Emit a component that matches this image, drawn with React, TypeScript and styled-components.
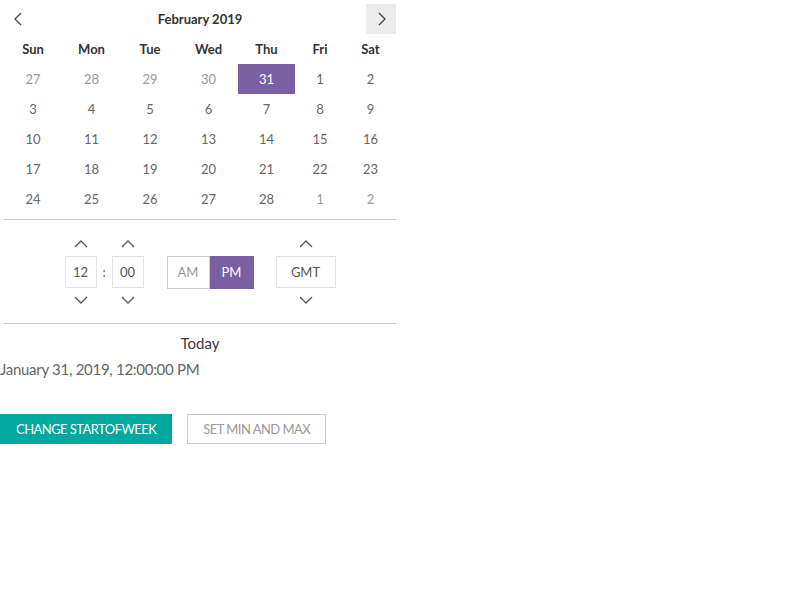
import React from "react";
import styled, { createGlobalStyle } from "styled-components";

const GlobalStyle = createGlobalStyle`
  body {
    margin: 0;
    font-family: Lato, "Open Sans", sans-serif;
    background: #fff;
    color: #333;
  }
`;

const Page = styled.div`
  width: 400px;
`;

const Calendar = styled.div`
  padding: 4px 4px 0 4px;
`;

const Header = styled.div`
  display: flex;
  align-items: center;
  justify-content: space-between;
  height: 30px;
`;

const NavButton = styled.button<{ $hover?: boolean }>`
  width: 30px;
  height: 30px;
  border: none;
  padding: 0;
  display: flex;
  align-items: center;
  justify-content: center;
  background: ${(p) => (p.$hover ? "#ececec" : "transparent")};
  color: #444;
  cursor: pointer;
`;

const Title = styled.div`
  font-size: 13px;
  font-weight: 700;
  color: #333;
`;

const Grid = styled.div`
  display: grid;
  grid-template-columns: 58px 59px 58px 59px 57px 50px 51px;
  grid-auto-rows: 30px;
`;

const WeekDay = styled.div`
  display: flex;
  align-items: center;
  justify-content: center;
  font-size: 13px;
  font-weight: 700;
  color: #333;
`;

const Day = styled.div<{ $muted?: boolean; $selected?: boolean }>`
  display: flex;
  align-items: center;
  justify-content: center;
  font-size: 13px;
  color: ${(p) => (p.$selected ? "#fff" : p.$muted ? "#999" : "#666")};
  background: ${(p) => (p.$selected ? "#7b5fa5" : "transparent")};
  cursor: pointer;
`;

const Divider = styled.div<{ $top?: number }>`
  margin: ${(p) => p.$top ?? 0}px 4px 0 4px;
  border-top: 1px solid #ccc;
`;

const TimeRow = styled.div`
  display: flex;
  justify-content: center;
  align-items: center;
  padding: 12px 0 11px 0;
`;

const Spinner = styled.div`
  display: flex;
  flex-direction: column;
  align-items: center;
`;

const Arrow = styled.button`
  height: 24px;
  width: 32px;
  border: none;
  background: transparent;
  padding: 0;
  display: flex;
  align-items: center;
  justify-content: center;
  color: #555;
  cursor: pointer;
`;

const Field = styled.div<{ $width: number }>`
  width: ${(p) => p.$width}px;
  height: 32px;
  box-sizing: border-box;
  border: 1px solid #e3e3e3;
  display: flex;
  align-items: center;
  justify-content: center;
  font-size: 13px;
  color: #555;
`;

const Colon = styled.span`
  width: 15px;
  text-align: center;
  font-size: 13px;
  color: #555;
`;

const Meridiem = styled.div`
  display: flex;
  margin: 0 22px 0 23px;
`;

const MeridiemButton = styled.button<{ $active?: boolean }>`
  width: ${(p) => (p.$active ? 44 : 43)}px;
  height: 33px;
  box-sizing: border-box;
  border: 1px solid ${(p) => (p.$active ? "#7b5fa5" : "#ccc")};
  background: ${(p) => (p.$active ? "#7b5fa5" : "#fff")};
  color: ${(p) => (p.$active ? "#fff" : "#999")};
  font-family: inherit;
  font-size: 13px;
  padding: 0;
  cursor: pointer;
`;

const Today = styled.div`
  text-align: center;
  font-size: 15px;
  line-height: 20px;
  color: #3a3a3a;
  padding-top: 9px;
`;

const DateText = styled.div`
  font-size: 15px;
  line-height: 20px;
  letter-spacing: -0.28px;
  color: #666;
  margin-top: 6px;
`;

const Actions = styled.div`
  display: flex;
  gap: 15px;
  margin-top: 35px;
`;

const ActionButton = styled.button<{ $primary?: boolean }>`
  height: 30px;
  padding: 0 15px;
  box-sizing: border-box;
  border: 1px solid ${(p) => (p.$primary ? "#00a8a0" : "#ccc")};
  background: ${(p) => (p.$primary ? "#00a8a0" : "#fff")};
  color: ${(p) => (p.$primary ? "#fff" : "#999")};
  font-family: inherit;
  font-size: 13px;
  letter-spacing: -0.55px;
  text-transform: uppercase;
  cursor: pointer;
`;

const Chevron = ({ dir }: { dir: "left" | "right" | "up" | "down" }) => {
  const paths: Record<string, string> = {
    left: "M10 2 L4 8 L10 14",
    right: "M6 2 L12 8 L6 14",
    up: "M2 11 L8 5 L14 11",
    down: "M2 5 L8 11 L14 5",
  };
  return (
    <svg width="16" height="16" viewBox="0 0 16 16" fill="none">
      <path d={paths[dir]} stroke="currentColor" strokeWidth="1.3" />
    </svg>
  );
};

const weekDays = ["Sun", "Mon", "Tue", "Wed", "Thu", "Fri", "Sat"];

const days: { n: number; muted?: boolean; selected?: boolean }[] = [
  { n: 27, muted: true },
  { n: 28, muted: true },
  { n: 29, muted: true },
  { n: 30, muted: true },
  { n: 31, selected: true },
  ...Array.from({ length: 28 }, (_, i) => ({ n: i + 1 })),
  { n: 1, muted: true },
  { n: 2, muted: true },
];

const TimeSpinner = ({ value, width }: { value: string; width: number }) => (
  <Spinner>
    <Arrow>
      <Chevron dir="up" />
    </Arrow>
    <Field $width={width}>{value}</Field>
    <Arrow>
      <Chevron dir="down" />
    </Arrow>
  </Spinner>
);

export default function App() {
  return (
    <Page>
      <GlobalStyle />
      <Calendar>
        <Header>
          <NavButton>
            <Chevron dir="left" />
          </NavButton>
          <Title>February 2019</Title>
          <NavButton $hover>
            <Chevron dir="right" />
          </NavButton>
        </Header>
        <Grid>
          {weekDays.map((d) => (
            <WeekDay key={d}>{d}</WeekDay>
          ))}
          {days.map((d, i) => (
            <Day key={i} $muted={d.muted} $selected={d.selected}>
              {d.n}
            </Day>
          ))}
        </Grid>
      </Calendar>
      <Divider $top={5} />
      <TimeRow>
        <TimeSpinner value="12" width={32} />
        <Colon>:</Colon>
        <TimeSpinner value="00" width={32} />
        <Meridiem>
          <MeridiemButton>AM</MeridiemButton>
          <MeridiemButton $active>PM</MeridiemButton>
        </Meridiem>
        <TimeSpinner value="GMT" width={60} />
      </TimeRow>
      <Divider />
      <Today>Today</Today>
      <DateText>January 31, 2019, 12:00:00 PM</DateText>
      <Actions>
        <ActionButton $primary>Change startOfWeek</ActionButton>
        <ActionButton>Set min and max</ActionButton>
      </Actions>
    </Page>
  );
}
